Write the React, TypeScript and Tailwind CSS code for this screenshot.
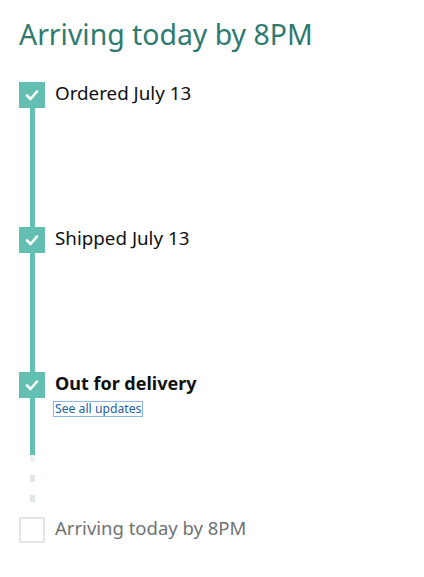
import React from "react";

const teal = "bg-[#62bfb1]";

function CheckBox() {
  return (
    <div className={`flex h-[26px] w-[26px] flex-none items-center justify-center ${teal}`}>
      <svg width="16" height="16" viewBox="0 0 16 16" fill="none">
        <polyline
          points="3,8.5 6.5,12 13,4.5"
          stroke="#ffffff"
          strokeWidth="2.6"
          strokeLinecap="round"
          strokeLinejoin="round"
        />
      </svg>
    </div>
  );
}

function Step({ label }: { label: string }) {
  return (
    <div className="flex h-[145px] gap-[10px]">
      <div className="flex w-[26px] flex-none flex-col items-center">
        <CheckBox />
        <div className={`w-[5px] flex-1 ${teal}`} />
      </div>
      <p className="-mt-[1px] text-[18.8px] leading-[24px] text-[#0f1111]">{label}</p>
    </div>
  );
}

export default function App() {
  return (
    <div className="min-h-[577px] bg-white px-[19px] pt-[15px]" style={{ fontFamily: '"Noto Sans", Arial, sans-serif' }}>
      <h1 className="text-[28.4px] leading-[38px] text-[#2e7a70]">Arriving today by 8PM</h1>
      <div className="mt-[29px]">
        <Step label="Ordered July 13" />
        <Step label="Shipped July 13" />
        <div className="flex h-[145px] gap-[10px]">
          <div className="flex w-[26px] flex-none flex-col items-center">
            <CheckBox />
            <div className={`h-[57px] w-[5px] ${teal}`} />
            <div className="h-[7px] w-[5px] bg-[#edf1f0]" />
            <div className="mt-[13px] h-[7px] w-[5px] bg-[#e3e6e6]" />
            <div className="mt-[13px] h-[7px] w-[5px] bg-[#e3e6e6]" />
          </div>
          <div className="-mt-[1px]">
            <p className="text-[18px] font-bold leading-[24px] text-[#0f1111]">Out for delivery</p>
            <a href="#" className="-ml-[2px] -mt-[1px] inline-block border border-[#8db6e8] px-[1px] text-[12.2px] leading-[14px] text-[#2162a1]">
              See all updates
            </a>
          </div>
        </div>
        <div className="flex gap-[10px]">
          <div className="h-[26px] w-[26px] flex-none border-2 border-[#e3e6e6]" />
          <p className="-mt-[1px] text-[18.5px] leading-[24px] text-[#6f7373]">Arriving today by 8PM</p>
        </div>
      </div>
    </div>
  );
}
